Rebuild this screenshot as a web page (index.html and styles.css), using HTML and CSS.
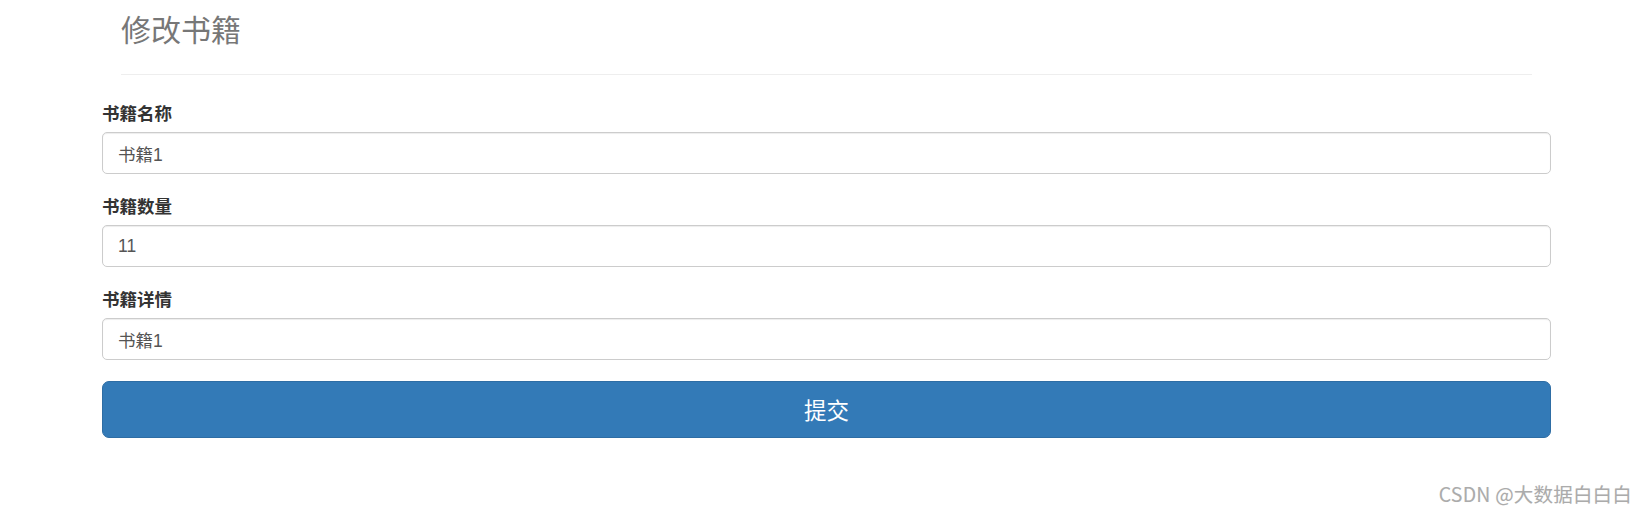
FILE: index.html
```html
<!DOCTYPE html>
<html lang="zh">
<head>
<meta charset="utf-8">
<title>修改书籍</title>
<link rel="stylesheet" href="styles.css">
</head>
<body>
<div class="container">
  <div class="page-header">
    <h3 class="title">修改书籍</h3>
  </div>
  <form class="form">
    <div class="form-group">
      <label class="label">书籍名称</label>
      <input class="control" type="text" value="书籍1">
    </div>
    <div class="form-group">
      <label class="label">书籍数量</label>
      <input class="control" type="text" value="11">
    </div>
    <div class="form-group">
      <label class="label">书籍详情</label>
      <input class="control" type="text" value="书籍1">
    </div>
    <button class="btn-submit" type="button">提交</button>
  </form>
</div>
<div class="watermark">CSDN @大数据白白白</div>
</body>
</html>
```

FILE: styles.css
```css
html, body {
  margin: 0;
  padding: 0;
  background: #fff;
}
body {
  width: 1646px;
  height: 512px;
  position: relative;
  overflow: hidden;
  font-family: "Noto Sans CJK SC", "Liberation Sans", sans-serif;
  color: #333;
}
.container {
  margin-left: 102px;
  width: 1449px;
}
.page-header {
  margin: 0 19px 25px 19px;
  padding: 12px 0 29px 0;
  border-bottom: 1px solid #eee;
}
.title {
  margin: 0;
  font-size: 30px;
  line-height: 33px;
  font-weight: 400;
  color: #777;
}
.form {
  display: flex;
  flex-direction: column;
}
.form-group {
  display: flex;
  flex-direction: column;
  margin-bottom: 19px;
}
.label {
  font-size: 17.5px;
  line-height: 26px;
  font-weight: 700;
  color: #333;
  margin-bottom: 6px;
}
.control {
  box-sizing: border-box;
  height: 42px;
  width: 100%;
  padding: 0 15px;
  border: 1px solid #ccc;
  border-radius: 5px;
  font-family: "Liberation Sans", "Noto Sans CJK SC", sans-serif;
  font-size: 17.5px;
  color: #555;
  background: #fff;
  box-shadow: inset 0 1px 1px rgba(0,0,0,0.075);
  outline: none;
}
.btn-submit {
  box-sizing: border-box;
  margin-top: 2px;
  height: 57px;
  width: 100%;
  border: 1px solid #2e6da4;
  border-radius: 7px;
  background: #337ab7;
  color: #fff;
  font-family: "Noto Sans CJK SC", "Liberation Sans", sans-serif;
  font-size: 22.5px;
  line-height: 1;
}
.watermark {
  position: absolute;
  right: 14px;
  top: 481px;
  font-family: "Noto Sans CJK SC", "Noto Sans", sans-serif;
  font-size: 19.5px;
  line-height: 26px;
  color: #ababab;
  letter-spacing: 0.2px;
  text-shadow: 0 0 1px rgba(0,0,0,0.08);
}
```
